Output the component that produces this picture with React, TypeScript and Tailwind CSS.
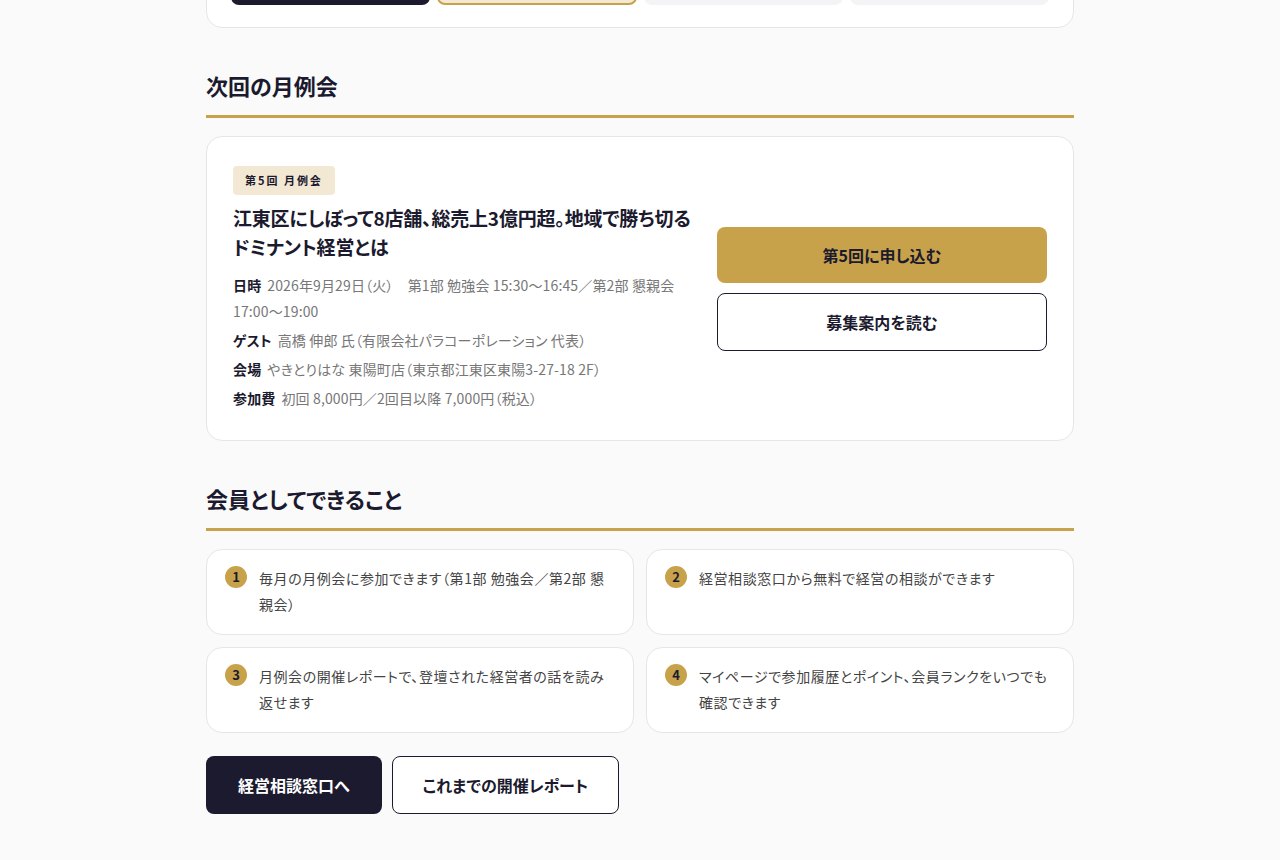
import React from 'react';

const gold = 'bg-[#c8a24a]';

const benefits = [
  { n: 1, text: '毎月の月例会に参加できます（第1部 勉強会／第2部 懇親会）' },
  { n: 2, text: '経営相談窓口から無料で経営の相談ができます' },
  { n: 3, text: '月例会の開催レポートで、登壇された経営者の話を読み返せます' },
  { n: 4, text: 'マイページで参加履歴とポイント、会員ランクをいつでも確認できます' },
];

const details = [
  { label: '日時', value: '2026年9月29日（火）　第1部 勉強会 15:30〜16:45／第2部 懇親会 17:00〜19:00' },
  { label: 'ゲスト', value: '高橋 伸郎 氏（有限会社パラコーポレーション 代表）' },
  { label: '会場', value: 'やきとりはな 東陽町店（東京都江東区東陽3-27-18 2F）' },
  { label: '参加費', value: '初回 8,000円／2回目以降 7,000円（税込）' },
];

function SectionTitle({ children }: { children: React.ReactNode }) {
  return (
    <h2 className="text-[22px] font-bold leading-[31px] text-[#1b1a2e] pb-[14px] border-b-[3px] border-[#c8a24a]">
      {children}
    </h2>
  );
}

export default function App() {
  return (
    <div className="min-h-screen overflow-hidden bg-[#fafafa] text-[#1b1a2e] font-['Noto_Sans_CJK_JP','Noto_Sans',sans-serif] [font-feature-settings:'palt']">
      <div className="w-[868px] mx-auto pb-12">
        {/* tabs card (scrolled partly off screen) */}
        <div className="-mt-[64px] bg-white border border-[#e6e6e6] rounded-2xl px-6 pt-6 pb-[22px]">
          <div className="grid grid-cols-4 gap-[7px]">
            <button className="h-11 rounded-lg bg-[#1b1a2e] text-white text-sm font-bold">すべて</button>
            <button className="h-11 rounded-lg bg-[#f3e8d3] border-2 border-[#c8a24a] text-sm font-bold">開催予定</button>
            <button className="h-11 rounded-lg bg-[#f4f4f6] text-sm">開催済み</button>
            <button className="h-11 rounded-lg bg-[#f4f4f6] text-sm">レポート</button>
          </div>
        </div>

        {/* next meeting */}
        <section className="mt-[42px]">
          <SectionTitle>次回の月例会</SectionTitle>
          <div className="mt-[18px] bg-white border border-[#e6e6e6] rounded-2xl pt-[29px] pb-[29px] px-[26px] grid grid-cols-[1fr_330px] gap-6 items-center">
            <div>
              <span className="inline-block bg-[#f3e8d3] rounded px-3 py-1.5 text-[11px] leading-[17px] font-bold tracking-[0.18em]">
                第5回 月例会
              </span>
              <h3 className="mt-2 text-[19px] leading-[29px] font-bold tracking-[-0.01em]">
                江東区にしぼって8店舗、総売上3億円超。地域で勝ち切るドミナント経営とは
              </h3>
              <dl className="mt-[11px] flex flex-col gap-[3px] text-sm leading-[26px] tracking-[0.01em]">
                {details.map((d) => (
                  <div key={d.label}>
                    <dt className="inline font-bold text-[#1b1a2e] mr-1.5">{d.label}</dt>
                    <dd className="inline text-[#777777]">{d.value}</dd>
                  </div>
                ))}
              </dl>
            </div>
            <div className="flex flex-col gap-[10px]">
              <button className={`h-14 rounded-lg ${gold} text-base font-bold text-[#1b1a2e]`}>第5回に申し込む</button>
              <button className="h-[58px] rounded-lg bg-white border border-[#1b1a2e] text-base font-bold text-[#1b1a2e]">
                募集案内を読む
              </button>
            </div>
          </div>
        </section>

        {/* benefits */}
        <section className="mt-[42px]">
          <SectionTitle>会員としてできること</SectionTitle>
          <div className="mt-[18px] grid grid-cols-2 gap-3">
            {benefits.map((b) => (
              <div key={b.n} className="bg-white border border-[#e6e6e6] rounded-2xl px-[18px] pt-[15px] pb-[17px] flex items-start gap-3">
                <span className={`mt-[1px] shrink-0 w-[22px] h-[22px] rounded-full ${gold} flex items-center justify-center text-[13px] font-bold text-[#1b1a2e]`}>
                  {b.n}
                </span>
                <p className="text-sm leading-[26px] text-[#444444] tracking-[0.04em]">{b.text}</p>
              </div>
            ))}
          </div>
          <div className="mt-[23px] flex gap-[10px]">
            <button className="h-[58px] px-8 rounded-lg bg-[#1b1a2e] text-white text-base font-bold">経営相談窓口へ</button>
            <button className="h-[58px] px-[30px] rounded-lg bg-white border border-[#1b1a2e] text-base font-bold">これまでの開催レポート</button>
          </div>
        </section>
      </div>
    </div>
  );
}
